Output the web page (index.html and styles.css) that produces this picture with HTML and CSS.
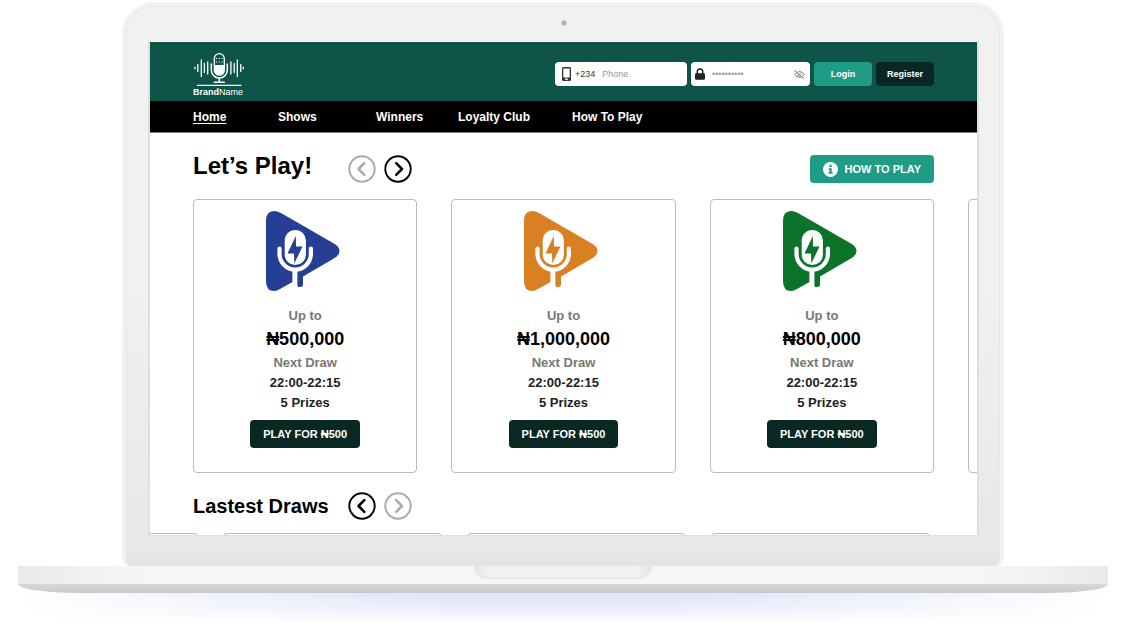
FILE: index.html
```
<!DOCTYPE html>
<html lang="en">
<head>
<meta charset="utf-8">
<title>BrandName</title>
<link rel="stylesheet" href="styles.css">
</head>

<body>
<svg class="defs" aria-hidden="true">
	<symbol id="mic" viewBox="0 0 78 80">
		<path fill="currentColor" d="M0 10Q0 0 8 0Q11 0 15 2L67 32Q73.500 35.500 73.500 40Q73.500 44.500 67 48L37 65.500V73.500Q37 76 34 76H32.500Q31 76 31 74L26.500 71L14 78Q11 80 8 80Q0 80 0 70Z"/>
		<rect x="18.700" y="19" width="21.200" height="35" rx="10.600" fill="#fff"/>
		<path d="M13.500 37.500V42.800A15.700 15.700 0 0 0 44.900 42.800V37.500" fill="none" stroke="#fff" stroke-width="4.200" stroke-linecap="round"/>
		<path d="M28.900 59V80" stroke="#fff" stroke-width="5"/>
		<path fill="currentColor" d="M29.800 25L21.500 42.500H28L28.300 52.500L36.500 35.500H30Z"/>
	</symbol>
	<symbol id="prev" viewBox="0 0 28 28">
		<circle cx="14" cy="14" r="12.700" fill="none" stroke="currentColor" stroke-width="1.900"/>
		<path d="M16.300 8.200L10.500 14L16.300 19.800" fill="none" stroke="currentColor" stroke-width="2.500" stroke-linecap="round" stroke-linejoin="round"/>
	</symbol>
	<symbol id="next" viewBox="0 0 28 28">
		<circle cx="14" cy="14" r="12.700" fill="none" stroke="currentColor" stroke-width="1.900"/>
		<path d="M12.200 8.200L18 14L12.200 19.800" fill="none" stroke="currentColor" stroke-width="2.500" stroke-linecap="round" stroke-linejoin="round"/>
	</symbol>
</svg>
<div class="laptop">
	<div class="lid">
		<span class="camera"></span>
		<div class="screen">
			<header class="header">
				<a class="logo" href="#">
					<svg width="52" height="34" viewBox="-1 0 52 34" aria-hidden="true">
						<g fill="none" stroke="#fff" stroke-linecap="round">
							<path stroke-width="1.300" d="M.9 14.200V15.800M3.800 11.500V18.500M7.300 7V23.500M10.400 10.500V19.500M13.700 9V21M36.900 9V21M40.200 10.500V19.500M43.300 7V23.500M46.800 11.500V18.500M49.200 14.200V15.800"/>
							<rect x="20.300" y=".7" width="10" height="21.500" rx="5" stroke-width="1.300"/>
							<path stroke-width="1.500" d="M17.300 11V17A8 8 0 0 0 33.300 17V11M25.300 25V29M20.300 29.300H30.300"/>
							<path stroke-width="1.300" d="M3.500 32.300H47"/>
						</g>
						<path fill="#fff" d="M20.500 12H30.100V17A4.800 4.800 0 0 1 20.500 17Z"/>
						<path stroke="#fff" stroke-width="1.100" stroke-dasharray="1.100 1.600" d="M22 5.500H29M22 9H29"/>
					</svg>
					<span class="logo_name"><b>Brand</b>Name</span>
				</a>
				<form class="login">
					<div class="field field_phone">
						<svg width="9" height="14" viewBox="0 0 9 14" aria-hidden="true"><path fill="#333" fill-rule="evenodd" d="M1.500 0H7.500Q9 0 9 1.500V12.500Q9 14 7.500 14H1.500Q0 14 0 12.500V1.500Q0 0 1.500 0ZM1.300 1.500V10.500H7.700V1.500ZM4.500 11.400A.9 .9 0 1 0 4.500 13.100A.9 .9 0 1 0 4.500 11.400Z"/></svg>
						<label for="phone">+234</label>
						<input id="phone" type="tel" placeholder="Phone">
					</div>
					<div class="field field_pass">
						<svg width="10" height="12" viewBox="0 0 10 12" aria-hidden="true"><path d="M2.300 6V3.600A2.700 2.700 0 0 1 7.700 3.600V6" fill="none" stroke="#222" stroke-width="1.500"/><rect y="5.200" width="10" height="6.600" rx="1.200" fill="#222"/></svg>
						<input type="password" placeholder="••••••••••" aria-label="Password">
						<button class="eye" type="button" aria-label="Show password">
							<svg width="11" height="9" viewBox="0 0 11 9"><path d="M.7 4.500Q5.500-1.500 10.300 4.500Q5.500 10.500 .7 4.500Z" fill="none" stroke="#777"/><circle cx="5.500" cy="4.500" r="1.600" fill="none" stroke="#777"/><path d="M1.300 0L10.800 8.200" stroke="#fff" stroke-width="1.500"/><path d="M.5 .4L10.300 8.700" stroke="#777"/></svg>
						</button>
					</div>
					<button class="btn btn_login" type="button">Login</button>
					<button class="btn btn_register" type="button">Register</button>
				</form>
			</header>
			<nav class="nav">
				<a class="active" href="#">Home</a>
				<a href="#">Shows</a>
				<a href="#">Winners</a>
				<a href="#">Loyalty Club</a>
				<a href="#">How To Play</a>
			</nav>
			<main>
				<section class="play">
					<div class="head">
						<h1>Let’s Play!</h1>
						<button class="arrow off" type="button" aria-label="Previous"><svg><use href="#prev"/></svg></button>
						<button class="arrow" type="button" aria-label="Next"><svg><use href="#next"/></svg></button>
						<button class="how" type="button">
							<svg width="15" height="15" viewBox="0 0 15 15" aria-hidden="true"><circle cx="7.500" cy="7.500" r="7.500" fill="#fff"/><path fill="#1e9c86" d="M6.300 2.800H8.700V5H6.300ZM5.500 6.200H8.700V10.200H9.600V11.800H5.500V10.200H6.400V7.700H5.500Z"/></svg>
							HOW TO PLAY
						</button>
					</div>
					<div class="cards">
						<article class="card">
							<svg class="mic blue" aria-hidden="true"><use href="#mic"/></svg>
							<p class="grey">Up to</p>
							<p class="amount">₦500,000</p>
							<p class="grey">Next Draw</p>
							<p>22:00-22:15</p>
							<p>5 Prizes</p>
							<button type="button">PLAY FOR ₦500</button>
						</article>
						<article class="card">
							<svg class="mic orange" aria-hidden="true"><use href="#mic"/></svg>
							<p class="grey">Up to</p>
							<p class="amount">₦1,000,000</p>
							<p class="grey">Next Draw</p>
							<p>22:00-22:15</p>
							<p>5 Prizes</p>
							<button type="button">PLAY FOR ₦500</button>
						</article>
						<article class="card">
							<svg class="mic green" aria-hidden="true"><use href="#mic"/></svg>
							<p class="grey">Up to</p>
							<p class="amount">₦800,000</p>
							<p class="grey">Next Draw</p>
							<p>22:00-22:15</p>
							<p>5 Prizes</p>
							<button type="button">PLAY FOR ₦500</button>
						</article>
						<article class="card"></article>
					</div>
				</section>
				<section>
					<div class="head head_draws">
						<h2>Lastest Draws</h2>
						<button class="arrow" type="button" aria-label="Previous draws"><svg><use href="#prev"/></svg></button>
						<button class="arrow off" type="button" aria-label="Next draws"><svg><use href="#next"/></svg></button>
					</div>
					<div class="draws">
						<div class="draw"></div>
						<div class="draw"></div>
						<div class="draw"></div>
						<div class="draw"></div>
					</div>
				</section>
			</main>
		</div>
	</div>
	<div class="base">
		<div class="base_top"><span class="notch"></span></div>
		<div class="base_bottom"></div>
	</div>
	<div class="shadow"></div>
</div>
</body>
</html>
```
FILE: styles.css
```
*{margin:0;padding:0;box-sizing:border-box;}
body{background:#fff;font-family:"Liberation Sans",Arial,sans-serif;color:#000;}
a{color:#fff;text-decoration:none;}
button{border:none;font:inherit;cursor:pointer;}
svg{display:block;flex:none;}
.defs{display:none;}

/* laptop */
.laptop{padding:2px 18px 0;overflow:hidden;}
.lid{
	margin:0 104px;
	padding:14px 21px 30px 22px;
	background:linear-gradient(#f0f1f0,#f0f1f0 50%,#e9e9e9 90%,#e9e9e9 97%,#e2e2e2);
	border:4px solid #f1f1f1;
	border-bottom:none;
	border-radius:32px 32px 8px 8px;
	box-shadow:inset 0 0 0 1px #e5e5e5;
}
.camera{
	display:block;
	width:6px;
	height:6px;
	margin:0 auto 15px;
	border-radius:50%;
	background:#aaa;
	border:1px solid #ccc;
}
.screen{
	overflow:hidden;
	background:#fff;
	border:2px solid #dfdfdf;
	border-top:1px solid #fff;
	border-bottom-width:1px;
}
.base_top{
	height:18px;
	background:linear-gradient(90deg,#e9e9e9,#f0f1f0 6%,#f6f6f6 12%,#f6f6f6 88%,#f0f1f0 94%,#e9e9e9);
}
.notch{
	display:block;
	width:178px;
	height:13px;
	margin:0 auto;
	border-radius:0 0 14px 14px;
	background:linear-gradient(90deg,#e2e2e2,#f0f2f1 8%,#f0f2f1 92%,#e2e2e2);
	box-shadow:inset 0 -2px 2px #e6e6e6;
}
.base_bottom{
	height:9px;
	background:linear-gradient(#d8d8d8,#c9c9c9);
	border-radius:0 0 60px 60px / 0 0 9px 9px;
}
.shadow{
	height:34px;
	background:
		linear-gradient(90deg,#fff,transparent 40%,transparent 60%,#fff),
		linear-gradient(#dee3f8,#e8ecfb 40%,#fff 90%);
}

/* header */
.header{
	display:flex;
	justify-content:space-between;
	align-items:center;
	padding:11px 43px 4px;
	background:#0f5449;
}
.logo_name{display:block;font-size:9px;line-height:10px;}
.login{display:flex;gap:4px;margin-bottom:2px;}
.field{
	display:flex;
	align-items:center;
	height:24px;
	border-radius:4px;
	background:#fff;
	font-size:9px;
	color:#333;
}
.field_phone{width:132px;padding:0 7px;}
.field_phone label{margin:0 7px 0 4px;}
.field_pass{width:119px;padding:0 5px 0 4px;}
.field_pass input{margin-left:7px;}
.field input{
	flex:1;
	min-width:0;
	border:none;
	background:none;
	font:inherit;
	color:#333;
}
.field input::placeholder{color:#999;}
.eye{background:none;}
.btn{width:58px;height:24px;border-radius:4px;color:#fff;font-size:9px;font-weight:bold;}
.btn_login{background:#1e9c86;}
.btn_register{background:#0a2823;}

.nav{
	display:grid;
	grid-template-columns:85px 98px 82px 114px auto;
	padding:2px 43px 0;
	background:#000;
	border-bottom:1px solid #777;
	font-size:12px;
	font-weight:bold;
	line-height:29px;
}
.nav .active{text-decoration:underline;text-underline-offset:2px;}

/* games */
.play{padding:0 43px;}
.head{display:flex;align-items:center;gap:8px;padding:22px 0 16px;}
.head h1{width:147px;font-size:24px;line-height:22px;padding-bottom:6px;}
.head h2{width:147px;font-size:20px;line-height:28px;}
.arrow{width:28px;height:28px;background:none;color:#000;}
.arrow svg{width:28px;height:28px;}
.off{color:#aaa;}
.head .how{
	display:flex;
	align-items:center;
	gap:7px;
	height:28px;
	margin-left:auto;
	padding:0 13px;
	border-radius:4px;
	background:#1e9c86;
	color:#fff;
	font-size:11px;
	font-weight:bold;
}
.cards{
	display:grid;
	grid-auto-flow:column;
	grid-auto-columns:calc((100% - 68px) / 3);
	gap:34px;
}
.card{
	display:flex;
	flex-direction:column;
	align-items:center;
	padding:11px 0 24px;
	border:1px solid #bbb;
	border-radius:4px;
	font-size:13px;
	font-weight:bold;
	line-height:20px;
	color:#222;
}
.mic{width:78px;height:80px;margin-bottom:15px;}
.blue{color:#263f94;}
.orange{color:#d98023;}
.green{color:#0b7429;}
.card .grey{color:#777;}
.card .amount{font-size:18px;line-height:27px;color:#000;}
.card button{
	height:28px;
	margin-top:7px;
	padding:0 13px;
	border-radius:4px;
	background:#0a2823;
	color:#fff;
	font-size:11px;
	font-weight:bold;
}

/* draws, only the top of the row is on screen */
.head_draws{padding:19px 43px 13px;}
.draws{
	display:grid;
	grid-template-columns:48px repeat(3,1fr);
	gap:25px;
	padding-right:47px;
	height:2px;
	overflow:hidden;
}
.draw{
	height:20px;
	border:1px solid #bbb;
	border-radius:4px;
}
.draw:first-child{border-left:none;border-radius:0 4px 4px 0;}
```
